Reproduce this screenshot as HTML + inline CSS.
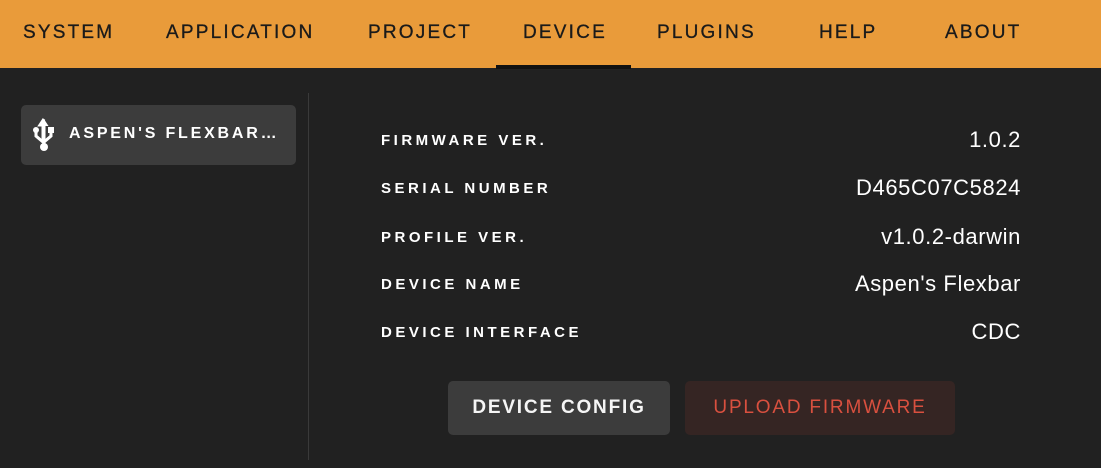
<!DOCTYPE html>
<html><head><meta charset="utf-8"><style>
*{margin:0;padding:0;box-sizing:border-box}
body{width:1101px;height:468px;background:#212121;font-family:"Liberation Sans",sans-serif;position:relative;overflow:hidden;color:#fff}
.nav{position:absolute;left:0;top:0;width:1101px;height:68px;background:#e99b3a}
.nav span{position:absolute;top:22px;font-size:19px;letter-spacing:2.2px;color:#1a1a1a;-webkit-text-stroke:0.3px #1a1a1a}
.ul{position:absolute;left:496px;top:65px;width:135px;height:4px;background:#111}
.side{position:absolute;left:21px;top:105px;width:275px;height:60px;background:#3c3c3c;border-radius:5px}
.side span{position:absolute;left:48px;top:20px;font-size:16px;font-weight:bold;letter-spacing:2.8px}
.div{position:absolute;left:308px;top:93px;width:1px;height:367px;background:#3a3a3a}
.l{position:absolute;left:381px;font-size:15px;font-weight:bold;letter-spacing:3.5px}
.v{position:absolute;right:80px;font-size:22px;letter-spacing:0.6px}
.b{position:absolute;top:381px;height:54px;border-radius:5px;font-size:19px;font-weight:bold;letter-spacing:1.8px;text-align:center;line-height:54px}
</style></head><body>
<div class="nav">
<span style="left:23px">SYSTEM</span><span style="left:166px">APPLICATION</span><span style="left:368px">PROJECT</span><span style="left:523px">DEVICE</span><span style="left:657px">PLUGINS</span><span style="left:819px">HELP</span><span style="left:945px">ABOUT</span>
<div class="ul"></div></div>
<div class="side">
<svg style="position:absolute;left:12px;top:13px" width="22" height="34" viewBox="0 0 22 34"><path d="M11 1 L7 7 H10 V24 L3 18 V13 M11 24 L18 18 V13" stroke="#fff" stroke-width="3" fill="none"/><path d="M11 1 L6.5 8 H15.5Z" fill="#fff"/><circle cx="3" cy="12" r="3" fill="#fff"/><rect x="15" y="9" width="6" height="6" fill="#fff"/><rect x="9.5" y="7" width="3" height="20" fill="#fff"/><circle cx="11" cy="29" r="4" fill="#fff"/></svg>
<span>ASPEN'S FLEXBAR…</span></div>
<div class="div"></div>
<div class="l" style="top:132px">FIRMWARE VER.</div><div class="v" style="top:127px">1.0.2</div>
<div class="l" style="top:180px">SERIAL NUMBER</div><div class="v" style="top:175px">D465C07C5824</div>
<div class="l" style="top:229px">PROFILE VER.</div><div class="v" style="top:224px">v1.0.2-darwin</div>
<div class="l" style="top:276px">DEVICE NAME</div><div class="v" style="top:271px">Aspen's Flexbar</div>
<div class="l" style="top:324px">DEVICE INTERFACE</div><div class="v" style="top:319px">CDC</div>
<div class="b" style="left:448px;width:222px;background:#3c3c3c;color:#f5f5f5">DEVICE CONFIG</div>
<div class="b" style="left:685px;width:270px;background:#352523;color:#d9503f;font-weight:normal">UPLOAD FIRMWARE</div>
</body></html>
